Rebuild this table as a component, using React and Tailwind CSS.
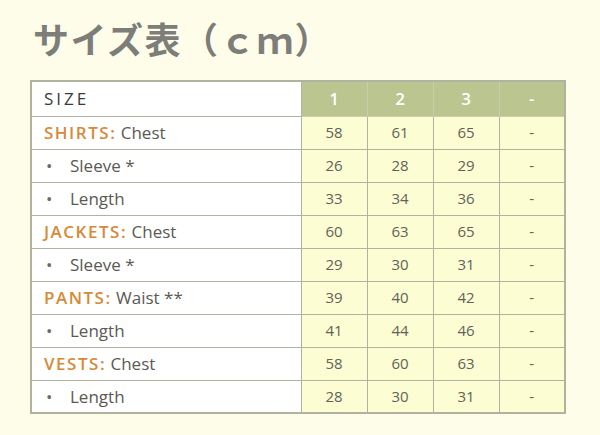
import React from 'react';

const rows = [
  { cat: 'SHIRTS', label: 'Chest', vals: ['58', '61', '65', '-'] },
  { label: 'Sleeve *', vals: ['26', '28', '29', '-'] },
  { label: 'Length', vals: ['33', '34', '36', '-'] },
  { cat: 'JACKETS', label: 'Chest', vals: ['60', '63', '65', '-'] },
  { label: 'Sleeve *', vals: ['29', '30', '31', '-'] },
  { cat: 'PANTS', label: 'Waist **', vals: ['39', '40', '42', '-'] },
  { label: 'Length', vals: ['41', '44', '46', '-'] },
  { cat: 'VESTS', label: 'Chest', vals: ['58', '60', '63', '-'] },
  { label: 'Length', vals: ['28', '30', '31', '-'] },
];

export default function App() {
  return (
    <div className="w-[600px] h-[435px] bg-[#fdfde9] pt-[14px] pl-[33px] font-['Open_Sans',sans-serif]">
      <h1 className="text-[36px] leading-[48px] font-bold text-[#7d7d7a] font-['Noto_Sans_CJK_JP',sans-serif] tracking-[1.5px]">
        サイズ表（ｃｍ）
      </h1>
      <table className="mt-[18px] -ml-[3px] border-collapse border-2 border-[#b2b39f] text-[17px]">
        <thead>
          <tr className="h-[35px]">
            <th className="w-[270px] bg-white border border-[#b2b39f] text-left font-medium pl-[12px] text-[#3a3a3a] tracking-[3px]">
              SIZE
            </th>
            {['1', '2', '3', '-'].map((h) => (
              <th key={h} className="w-[66px] bg-[#bac58f] border border-[#c9cfa8] text-white font-semibold text-[17px]">
                {h}
              </th>
            ))}
          </tr>
        </thead>
        <tbody>
          {rows.map((r, i) => (
            <tr key={i} className="h-[33px]">
              <td className="bg-white border border-[#b2b39f] pl-[12px] text-[#5a5a52] font-medium">
                {r.cat ? (
                  <span>
                    <span className="text-[#d68a38] font-semibold tracking-[1.5px]">{r.cat}:</span>{' '}
                    {r.label}
                  </span>
                ) : (
                  <span className="flex items-center">
                    <span className="w-[26px] pl-[2px] text-[#6a6a66]">•</span>
                    {r.label}
                  </span>
                )}
              </td>
              {r.vals.map((v, j) => (
                <td key={j} className="bg-[#fdfdd3] border border-[#b2b39f] text-center text-[15px] font-medium text-[#62625a]">
                  {v}
                </td>
              ))}
            </tr>
          ))}
        </tbody>
      </table>
    </div>
  );
}
